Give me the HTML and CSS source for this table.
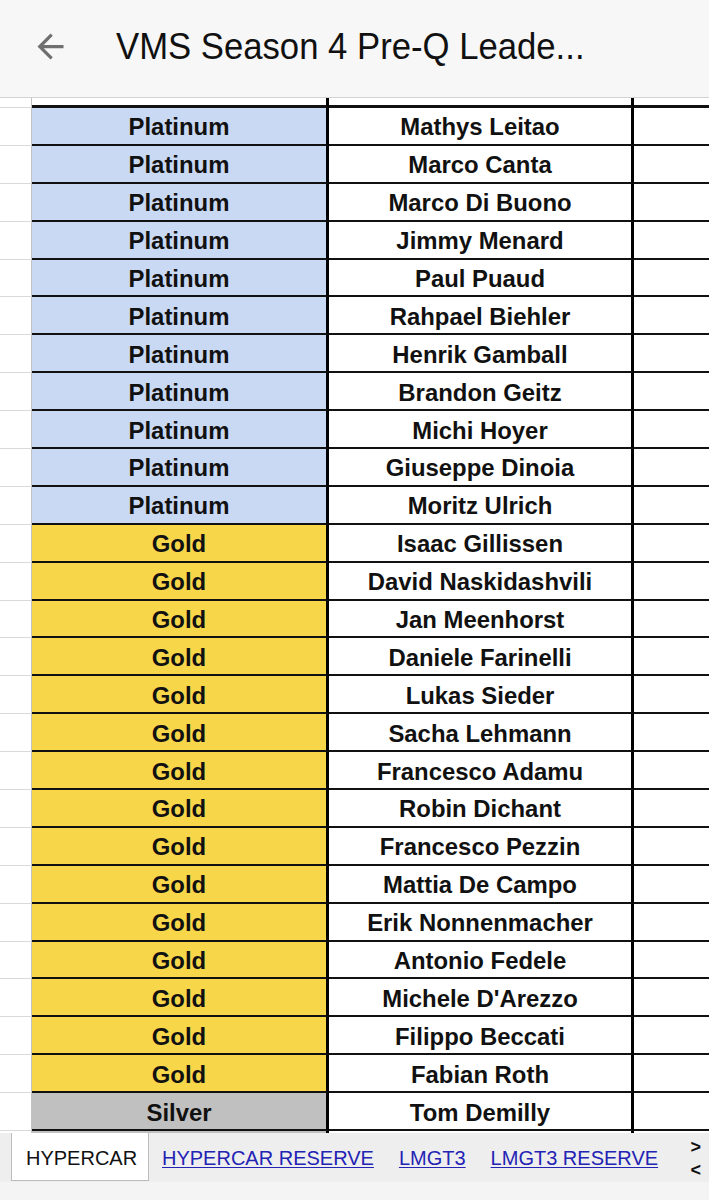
FILE: index.html
```html
<!DOCTYPE html>
<html lang="en">
<head>
<meta charset="utf-8">
<title>VMS Season 4 Pre-Q Leaderboard</title>
<link rel="stylesheet" href="styles.css">
</head>
<body>
<div class="screen">
  <header class="appbar">
    <svg class="back" viewBox="0 0 24 24" width="39" height="39" aria-hidden="true">
      <path d="M20 11H7.83l5.59-5.59L12 4l-8 8 8 8 1.41-1.41L7.83 13H20v-2z"/>
    </svg>
    <h1 class="title">VMS Season 4 Pre-Q Leade...</h1>
  </header>

  <main class="sheet">
    <div class="row row-top"><div class="gutter"></div><div class="cell c1"></div><div class="cell c2"></div><div class="cell c3"></div></div>

    <div class="row"><div class="gutter"></div><div class="cell c1 plat">Platinum</div><div class="cell c2">Mathys Leitao</div><div class="cell c3"></div></div>
    <div class="row"><div class="gutter"></div><div class="cell c1 plat">Platinum</div><div class="cell c2">Marco Canta</div><div class="cell c3"></div></div>
    <div class="row"><div class="gutter"></div><div class="cell c1 plat">Platinum</div><div class="cell c2">Marco Di Buono</div><div class="cell c3"></div></div>
    <div class="row"><div class="gutter"></div><div class="cell c1 plat">Platinum</div><div class="cell c2">Jimmy Menard</div><div class="cell c3"></div></div>
    <div class="row"><div class="gutter"></div><div class="cell c1 plat">Platinum</div><div class="cell c2">Paul Puaud</div><div class="cell c3"></div></div>
    <div class="row"><div class="gutter"></div><div class="cell c1 plat">Platinum</div><div class="cell c2">Rahpael Biehler</div><div class="cell c3"></div></div>
    <div class="row"><div class="gutter"></div><div class="cell c1 plat">Platinum</div><div class="cell c2">Henrik Gamball</div><div class="cell c3"></div></div>
    <div class="row"><div class="gutter"></div><div class="cell c1 plat">Platinum</div><div class="cell c2">Brandon Geitz</div><div class="cell c3"></div></div>
    <div class="row"><div class="gutter"></div><div class="cell c1 plat">Platinum</div><div class="cell c2">Michi Hoyer</div><div class="cell c3"></div></div>
    <div class="row"><div class="gutter"></div><div class="cell c1 plat">Platinum</div><div class="cell c2">Giuseppe Dinoia</div><div class="cell c3"></div></div>
    <div class="row"><div class="gutter"></div><div class="cell c1 plat">Platinum</div><div class="cell c2">Moritz Ulrich</div><div class="cell c3"></div></div>

    <div class="row"><div class="gutter"></div><div class="cell c1 gold">Gold</div><div class="cell c2">Isaac Gillissen</div><div class="cell c3"></div></div>
    <div class="row"><div class="gutter"></div><div class="cell c1 gold">Gold</div><div class="cell c2">David Naskidashvili</div><div class="cell c3"></div></div>
    <div class="row"><div class="gutter"></div><div class="cell c1 gold">Gold</div><div class="cell c2">Jan Meenhorst</div><div class="cell c3"></div></div>
    <div class="row"><div class="gutter"></div><div class="cell c1 gold">Gold</div><div class="cell c2">Daniele Farinelli</div><div class="cell c3"></div></div>
    <div class="row"><div class="gutter"></div><div class="cell c1 gold">Gold</div><div class="cell c2">Lukas Sieder</div><div class="cell c3"></div></div>
    <div class="row"><div class="gutter"></div><div class="cell c1 gold">Gold</div><div class="cell c2">Sacha Lehmann</div><div class="cell c3"></div></div>
    <div class="row"><div class="gutter"></div><div class="cell c1 gold">Gold</div><div class="cell c2">Francesco Adamu</div><div class="cell c3"></div></div>
    <div class="row"><div class="gutter"></div><div class="cell c1 gold">Gold</div><div class="cell c2">Robin Dichant</div><div class="cell c3"></div></div>
    <div class="row"><div class="gutter"></div><div class="cell c1 gold">Gold</div><div class="cell c2">Francesco Pezzin</div><div class="cell c3"></div></div>
    <div class="row"><div class="gutter"></div><div class="cell c1 gold">Gold</div><div class="cell c2">Mattia De Campo</div><div class="cell c3"></div></div>
    <div class="row"><div class="gutter"></div><div class="cell c1 gold">Gold</div><div class="cell c2">Erik Nonnenmacher</div><div class="cell c3"></div></div>
    <div class="row"><div class="gutter"></div><div class="cell c1 gold">Gold</div><div class="cell c2">Antonio Fedele</div><div class="cell c3"></div></div>
    <div class="row"><div class="gutter"></div><div class="cell c1 gold">Gold</div><div class="cell c2">Michele D'Arezzo</div><div class="cell c3"></div></div>
    <div class="row"><div class="gutter"></div><div class="cell c1 gold">Gold</div><div class="cell c2">Filippo Beccati</div><div class="cell c3"></div></div>
    <div class="row"><div class="gutter"></div><div class="cell c1 gold">Gold</div><div class="cell c2">Fabian Roth</div><div class="cell c3"></div></div>

    <div class="row"><div class="gutter"></div><div class="cell c1 silver">Silver</div><div class="cell c2">Tom Demilly</div><div class="cell c3"></div></div>
    <div class="row"><div class="gutter"></div><div class="cell c1 silver"></div><div class="cell c2"></div><div class="cell c3"></div></div>
  </main>

  <nav class="tabs">
    <span class="tab tab-active">HYPERCAR</span>
    <a class="tab tab-link" href="#">HYPERCAR RESERVE</a>
    <a class="tab tab-link" href="#">LMGT3</a>
    <a class="tab tab-link" href="#">LMGT3 RESERVE</a>
    <div class="scroller"><span>&gt;</span><span>&lt;</span></div>
  </nav>
  <div class="homebar"></div>
</div>
</body>
</html>
```

FILE: styles.css
```css
* { box-sizing: border-box; }

html, body {
  margin: 0;
  padding: 0;
  background: #ffffff;
}

.screen {
  width: 709px;
  height: 1200px;
  overflow: hidden;
  display: flex;
  flex-direction: column;
  font-family: "Liberation Sans", Arial, sans-serif;
}

/* ---------- app bar ---------- */
.appbar {
  height: 98px;
  flex: none;
  display: flex;
  align-items: flex-start;
  padding-left: 30.5px;
  background: #f7f7f7;
  border-bottom: 1px solid #d2d2d2;
}

.back {
  margin-top: 27px;
  fill: #6f6f6f;
  flex: none;
}

.title {
  margin: 27px 0 0 46.5px;
  font-size: 34.7px;
  line-height: 40px;
  font-weight: 400;
  color: #111111;
  white-space: nowrap;
  transform: scaleY(1.06);
  transform-origin: left bottom;
}

/* ---------- sheet ---------- */
.sheet {
  height: 1035px;
  flex: none;
  overflow: hidden;
  background: #ffffff;
}

.row {
  display: flex;
  height: 37.9px;
}

.row-top {
  height: 10px;
}

.gutter {
  width: 32px;
  flex: none;
  border-right: 1px solid #c2c2c2;
  border-bottom: 1px solid #d9d9d9;
}

.cell {
  display: flex;
  align-items: center;
  justify-content: center;
  padding-top: 3px;
  border-bottom: 2px solid #111111;
  font-size: 23.9px;
  font-weight: 700;
  color: #111111;
  white-space: nowrap;
}

.row-top .cell {
  padding-top: 0;
  border-bottom-width: 3px;
}

.c1 {
  width: 297px;
  flex: none;
  border-right: 3.5px solid #000000;
}

.c2 {
  width: 305px;
  flex: none;
  border-right: 3.5px solid #000000;
}

.c3 {
  flex: 1;
}

.plat { background: #c9d9f4; }
.gold { background: #f8d64a; }
.silver { background: #c0c0c0; }

/* ---------- tabs ---------- */
.tabs {
  height: 49px;
  flex: none;
  display: flex;
  align-items: flex-start;
  background: #eeeeee;
}

.tab {
  height: 48px;
  padding-top: 3px;
  line-height: 44px;
  font-size: 20px;
  white-space: nowrap;
}

.tab-active {
  margin-left: 11px;
  width: 138px;
  padding-left: 14px;
  background: #ffffff;
  color: #111111;
  border: 1px solid #bcbcbc;
  border-top: none;
}

.tab-link {
  color: #2323b4;
  text-decoration: underline;
  text-decoration-thickness: 1px;
  text-underline-offset: 2px;
  margin-left: 25px;
}

.tab-active + .tab-link {
  margin-left: 13px;
}

.scroller {
  margin-left: auto;
  margin-right: 8px;
  padding-top: 4px;
  display: flex;
  flex-direction: column;
  gap: 3px;
  font-size: 18px;
  font-weight: 700;
  line-height: 20px;
  color: #111111;
}

.homebar {
  flex: 1;
  background: #f4f4f4;
}
```
